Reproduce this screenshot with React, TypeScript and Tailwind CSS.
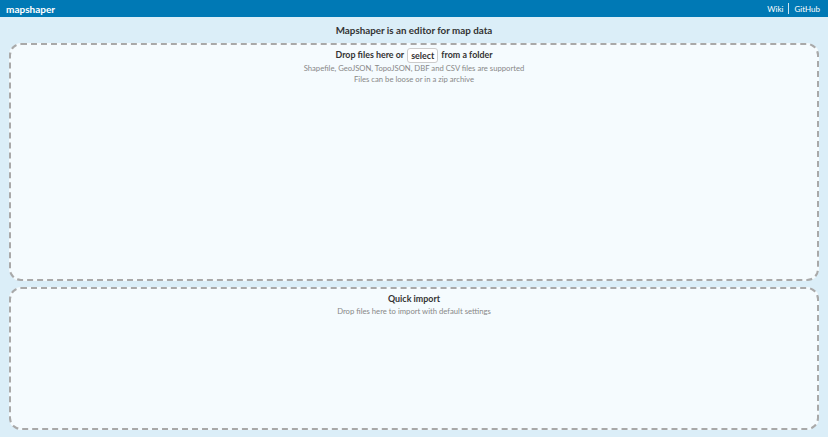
export default function App() {
  return (
    <div
      className="flex h-[437px] flex-col bg-[#dbeef8] text-[#333]"
      style={{ fontFamily: "Lato, 'Open Sans', sans-serif" }}
    >
      <header className="flex h-[17px] items-center justify-between bg-[#0079b5] px-[6px] text-white">
        <span className="text-[10px] font-bold leading-none">mapshaper</span>
        <nav className="flex items-center text-[8px] leading-none">
          <span>Wiki</span>
          <span className="mx-[5px] h-[11px] w-px bg-white/80" />
          <span className="mr-[2px]">GitHub</span>
        </nav>
      </header>

      <div className="flex h-[26px] items-center justify-center text-[9.8px] font-bold text-[#333]">
        Mapshaper is an editor for map data
      </div>

      <section className="mx-[9px] h-[238px] rounded-[12px] border-2 border-dashed border-[#a9a9a9] bg-[#f5fbfe] pt-[2px] text-center">
        <div className="flex items-center justify-center gap-[3px] text-[8.9px] font-bold leading-[16px]">
          <span>Drop files here or</span>
          <span className="rounded-[3px] border border-[#ccc] bg-white px-[3px] leading-[13px]">
            select
          </span>
          <span>from a folder</span>
        </div>
        <p className="text-[7.7px] leading-[11px] text-[#888]">
          Shapefile, GeoJSON, TopoJSON, DBF and CSV files are supported
        </p>
        <p className="text-[7.7px] leading-[11px] text-[#888]">Files can be loose or in a zip archive</p>
      </section>

      <section className="mx-[9px] mt-[6px] h-[143px] rounded-[12px] border-2 border-dashed border-[#a9a9a9] bg-[#f5fbfe] pt-[3px] text-center">
        <p className="text-[8.9px] font-bold leading-[14px]">Quick import</p>
        <p className="text-[7.7px] leading-[11px] text-[#888]">Drop files here to import with default settings</p>
      </section>
    </div>
  );
}
